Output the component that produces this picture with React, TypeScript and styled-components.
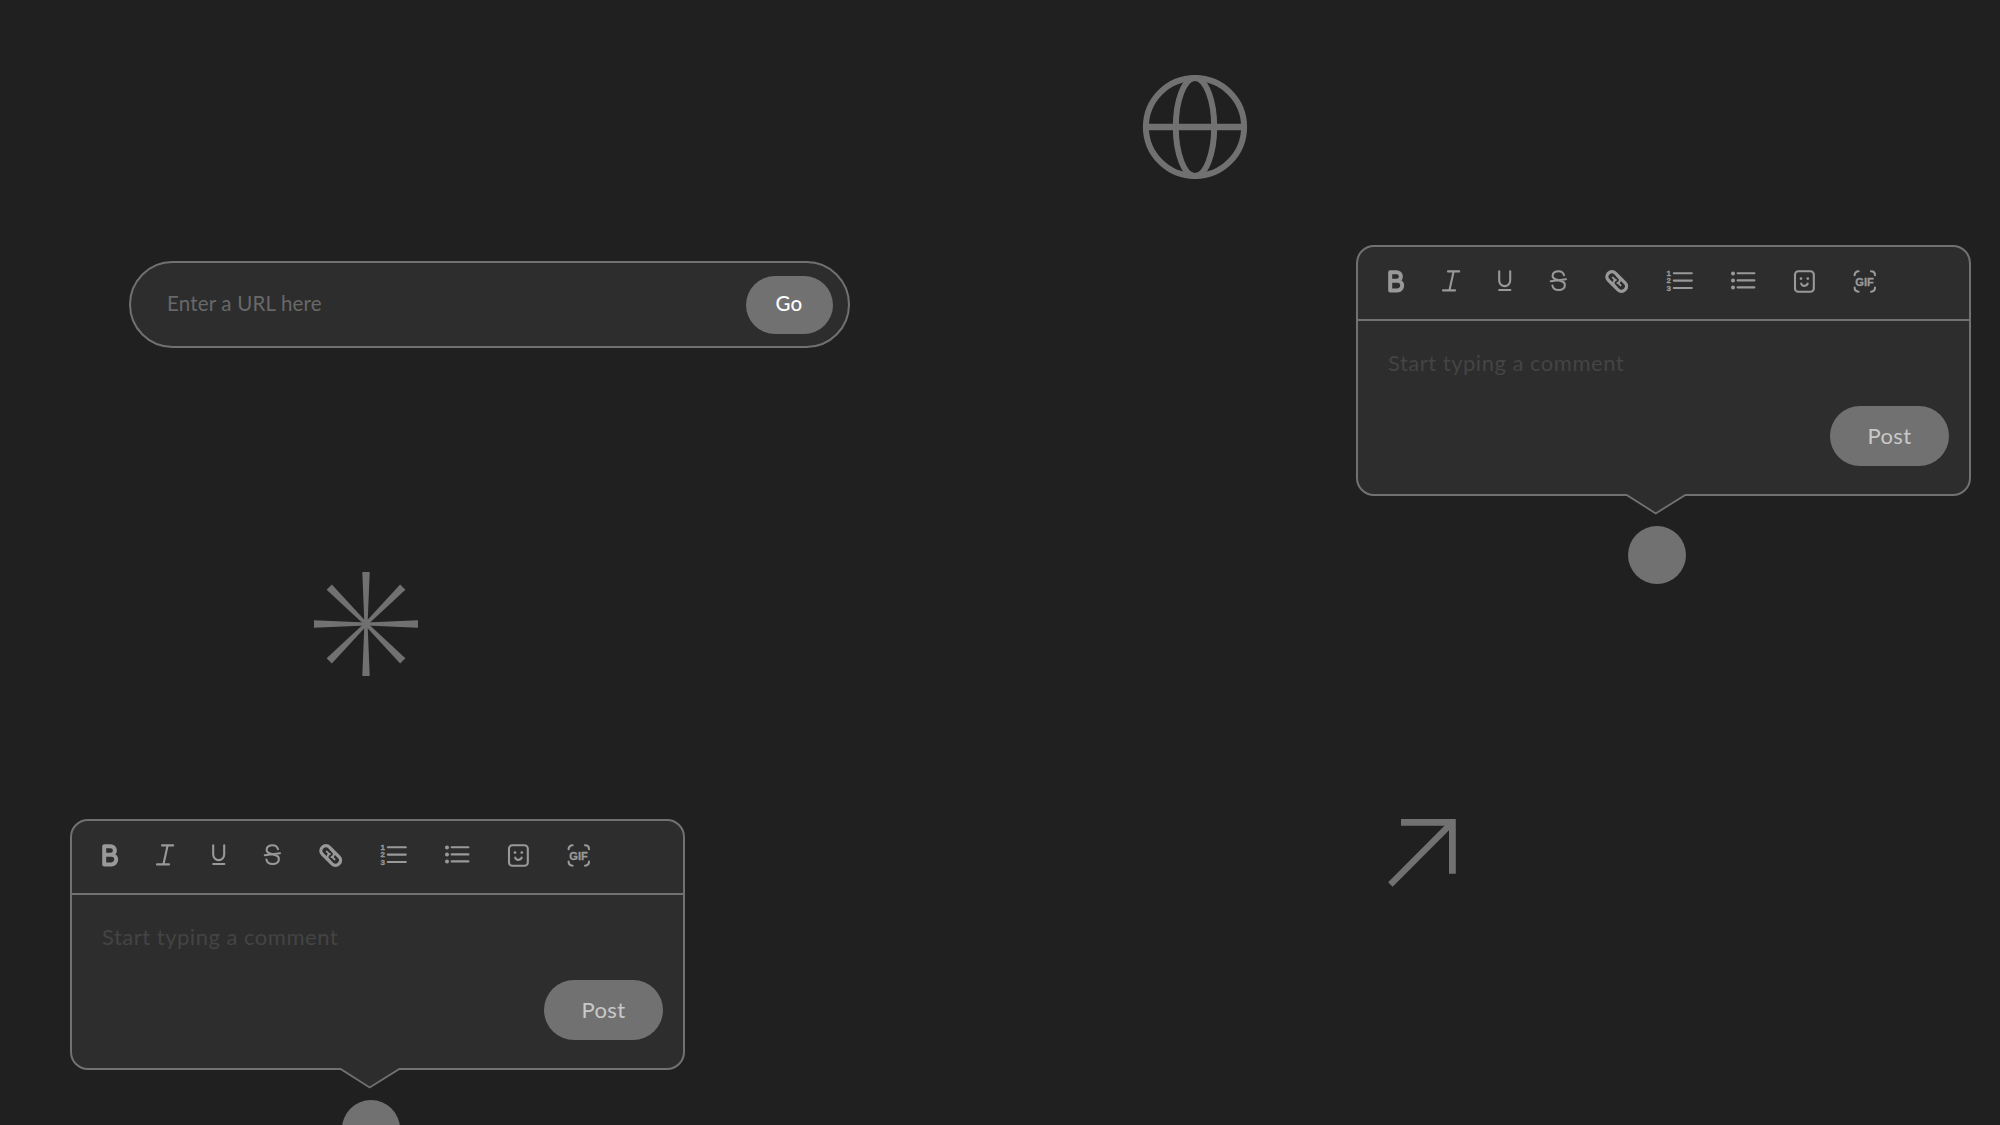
import React from 'react';
import styled, { createGlobalStyle } from 'styled-components';

const colors = {
  background: '#202020',
  surface: '#2d2d2d',
  line: '#717171',
  icon: '#999999',
  hint: '#444444',
};

const GlobalStyle = createGlobalStyle`
  body {
    margin: 0;
    background: ${colors.background};
    font-family: Lato, "Liberation Sans", sans-serif;
  }
`;

const Canvas = styled.main`
  position: relative;
  width: 2000px;
  height: 1125px;
  overflow: hidden;
  background: ${colors.background};
`;

interface IPlacedProps {
  $x: number;
  $y: number;
}

const Placed = styled.div<IPlacedProps>`
  position: absolute;
  left: ${({ $x }) => $x}px;
  top: ${({ $y }) => $y}px;

  > svg {
    display: block;
  }
`;

const UrlBar = styled.div`
  box-sizing: border-box;
  display: flex;
  align-items: center;
  justify-content: space-between;
  width: 721px;
  height: 87px;
  padding: 0 15px 0 36px;
  border: 2px solid ${colors.line};
  border-radius: 44px;
  background: ${colors.surface};
`;

const UrlHint = styled.span`
  padding-bottom: 3px;
  color: #686868;
  font-size: 20.5px;
  line-height: 28px;
  letter-spacing: 0.18px;
  white-space: nowrap;
`;

const Button = styled.button`
  display: flex;
  align-items: center;
  justify-content: center;
  border: 0;
  border-radius: 30px;
  background: ${colors.line};
  font-family: inherit;
`;

const GoButton = styled(Button)`
  width: 87px;
  height: 58px;
  padding: 0 1px 3px 0;
  color: #ffffff;
  font-size: 20.5px;
  font-weight: 500;
  letter-spacing: 0.3px;
`;

const PostButton = styled(Button)`
  width: 119px;
  height: 60px;
  padding: 0 0 2px;
  color: #c9c9c9;
  font-size: 22px;
  letter-spacing: 0.4px;
`;

const Comment = styled.section`
  display: flex;
  flex-direction: column;
  width: 615px;
`;

const Card = styled.div`
  box-sizing: border-box;
  position: relative;
  height: 251px;
  border: 2px solid ${colors.line};
  border-radius: 18px;
  background: ${colors.surface};
`;

const Toolbar = styled.div`
  box-sizing: border-box;
  display: flex;
  gap: 38px;
  height: 74px;
  padding: 23px 0 0 30px;
  border-bottom: 2px solid ${colors.line};
`;

const Body = styled.div`
  display: flex;
  flex-direction: column;
  padding: 28px 20px 0 30px;
`;

const CommentHint = styled.span`
  color: ${colors.hint};
  font-size: 22px;
  line-height: 28px;
  letter-spacing: 0.5px;
  white-space: nowrap;
`;

const Actions = styled.div`
  display: flex;
  justify-content: flex-end;
  margin-top: 29px;
`;

const Notch = styled.svg`
  position: absolute;
  left: 266px;
  top: 246px;
`;

const Dot = styled.div`
  width: 58px;
  height: 58px;
  margin: 30px 0 0 272px;
  border-radius: 50%;
  background: ${colors.line};
`;

const ToolIcon = styled.svg`
  flex: none;
  display: block;
  overflow: visible;
  fill: none;
  stroke: ${colors.icon};
  stroke-width: 2.1;
  stroke-linecap: round;
  stroke-linejoin: round;

  text {
    fill: ${colors.icon};
    stroke-width: 0.3;
    font-family: "Liberation Sans", sans-serif;
    font-weight: 700;
  }
`;

interface IToolProps {
  width: number;
  children: React.ReactNode;
}

const Tool = ({ width, children }: IToolProps) => (
  <ToolIcon width={width} height={23} viewBox={`0 0 ${width} 23`}>
    {children}
  </ToolIcon>
);

const CommentTools = () => (
  <Toolbar>
    <Tool width={16}>
      <path
        d="M2.2 2.2H8.6A4.3 4.3 0 0 1 8.6 10.8H2.2M8.6 10.8H9.4A4.8 4.8 0 0 1 9.4 20.4H2.2V2.2"
        strokeWidth="4"
      />
    </Tool>
    <Tool width={18}>
      <path d="M6 1.4H17.2M1 20.4H13M11.6 1.4L7.4 20.4" />
    </Tool>
    <Tool width={14}>
      <path d="M1.2 1.2V10.6A5.4 5.4 0 0 0 12.2 10.6V1.2M1.2 20H12.4" />
    </Tool>
    <Tool width={17}>
      <path d="M14 5.2C13.3 2.6 11.3 1.2 8.6 1.2C5.2 1.2 2.6 3 2.6 5.7C2.6 8.2 4.4 9.4 8.2 10.1C12.5 10.9 14.9 12 14.9 15C14.9 18.2 12.2 20 8.7 20C5.3 20 3 18.4 2.4 15.6M0.8 11.2L16 9.2" />
    </Tool>
    <Tool width={24}>
      <g transform="translate(11.7 11.5) rotate(45)">
        <rect x="-11.7" y="-5" width="23.4" height="10" rx="4.8" strokeWidth="3.3" />
        <path d="M-5.5 0H-2.6M2.6 0H5.5" strokeWidth="1.9" />
        <path
          d="M-3.4 -4.2H-1A3 3 0 0 1 1.7 0.4M3.4 4.2H1A3 3 0 0 1 -1.7 -0.4"
          strokeWidth="2.1"
        />
      </g>
    </Tool>
    <Tool width={26}>
      <path d="M6.8 3.2H24.8M6.8 10.6H24.8M6.8 18H24.8" />
      <text x="-0.5" y="6" fontSize="8">1</text>
      <text x="-0.5" y="13.4" fontSize="8">2</text>
      <text x="-0.5" y="20.8" fontSize="8">3</text>
    </Tool>
    <Tool width={25}>
      <path d="M6.6 3.3H23.4M6.6 10.4H23.4M6.6 17.4H23.4" />
      <path d="M2 3.5V3.5M2 10.5V10.5M2 17.4V17.4" strokeWidth="4" />
    </Tool>
    <Tool width={21}>
      <rect x="1" y="1.2" width="18.8" height="20.6" rx="3.4" />
      <path d="M7 8.6V8.6M13.8 8.6V8.6" strokeWidth="2.8" />
      <path d="M7.2 13.6C7.8 16.6 13 16.6 13.7 13.6" />
    </Tool>
    <Tool width={23}>
      <path d="M1.6 5.2C1.6 3 3 1.3 5.6 1.3M18 1.3C20.6 1.3 22 3 22 5.2M1.6 17.6C1.6 20 3 21.7 5.6 21.7M18 21.7C20.6 21.7 22 20 22 17.6" />
      <text x="11.6" y="15.5" fontSize="11.2" textAnchor="middle">
        GIF
      </text>
    </Tool>
  </Toolbar>
);

const CommentBox = () => (
  <Comment>
    <Card>
      <CommentTools />
      <Body>
        <CommentHint>Start typing a comment</CommentHint>
        <Actions>
          <PostButton>Post</PostButton>
        </Actions>
      </Body>
      <Notch width="66" height="22" viewBox="0 0 66 22">
        <path d="M2 0V1.2L31.7 19.8L62 1.2V0Z" fill={colors.surface} />
        <path
          d="M1.6 2H2.6L31.7 20.4L61.4 2H62.4"
          fill="none"
          stroke={colors.line}
          strokeWidth="1.8"
        />
      </Notch>
    </Card>
    <Dot />
  </Comment>
);

const GlobeIcon = () => (
  <svg width="106" height="106" viewBox="-53 -53 106 106">
    <g fill="none" stroke={colors.line} strokeWidth="6">
      <circle r="49.1" />
      <ellipse rx="19.2" ry="49.1" />
      <path d="M-49 0H49" strokeWidth="6.6" />
    </g>
  </svg>
);

const AsteriskIcon = () => (
  <svg width="106" height="106" viewBox="-53 -53 106 106">
    {[0, 45, 90, 135, 180, 225, 270, 315].map((angle) => (
      <path
        key={angle}
        d="M-1.6 0L-3.7 -52H3.7L1.6 0Z"
        fill={colors.line}
        transform={`rotate(${angle})`}
      />
    ))}
  </svg>
);

const ArrowIcon = () => (
  <svg width="72" height="72" viewBox="0 0 72 72">
    <g fill="none" stroke={colors.line} strokeWidth="6.8">
      <path d="M14 4.4H65.4V55.7" />
      <path d="M3.4 66.4L65 4.8" strokeWidth="6.4" />
    </g>
  </svg>
);

export default function App() {
  return (
    <>
      <GlobalStyle />
      <Canvas>
        <Placed $x={129} $y={261}>
          <UrlBar>
            <UrlHint>Enter a URL here</UrlHint>
            <GoButton>Go</GoButton>
          </UrlBar>
        </Placed>
        <Placed $x={1142} $y={74}>
          <GlobeIcon />
        </Placed>
        <Placed $x={1356} $y={245}>
          <CommentBox />
        </Placed>
        <Placed $x={313} $y={571}>
          <AsteriskIcon />
        </Placed>
        <Placed $x={70} $y={819}>
          <CommentBox />
        </Placed>
        <Placed $x={1387} $y={818}>
          <ArrowIcon />
        </Placed>
      </Canvas>
    </>
  );
}
